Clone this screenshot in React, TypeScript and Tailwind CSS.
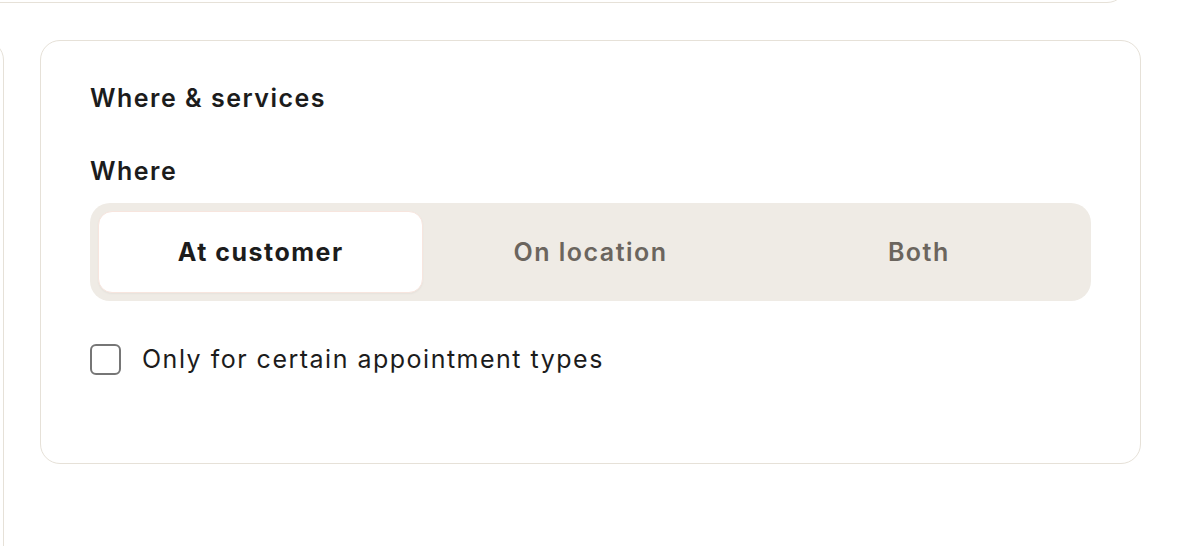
import { useState } from 'react';

const options = ['At customer', 'On location', 'Both'];

export default function App() {
  const [where, setWhere] = useState('At customer');
  const [onlyCertain, setOnlyCertain] = useState(false);

  return (
    <div className="h-[546px] w-full overflow-hidden bg-white font-['Inter',sans-serif] text-[25px] leading-[32px] tracking-[0.06em] text-[#1c1c1c]">
      {/* card above (only its bottom edge shows) */}
      <div className="-mt-[60px] -ml-[20px] h-[63px] w-[1147px] rounded-b-[20px] border border-[#e6e1d8]" />

      <div className="mt-[37px] flex items-start">
        {/* left column card */}
        <div className="-ml-[300px] h-[600px] w-[304px] shrink-0 rounded-tr-[20px] border border-[#e6e1d8]" />

        {/* Where & services */}
        <section className="ml-[36px] h-[424px] w-[1101px] shrink-0 rounded-[20px] border border-[#e6e1d8] px-[49px] pt-[41px]">
          <h2 className="font-semibold">Where &amp; services</h2>

          <h3 className="mt-[41px] font-semibold">Where</h3>

          <div className="mt-[16px] grid h-[98px] grid-cols-3 rounded-[20px] bg-[#efebe5] p-[8px]">
            {options.map((opt) => (
              <button
                key={opt}
                type="button"
                onClick={() => setWhere(opt)}
                className={
                  where === opt
                    ? 'mr-[3px] rounded-[14px] border border-[#f7e5de] bg-white font-bold text-[#1c1c1c] shadow-[0_1px_2px_rgba(0,0,0,0.04)]'
                    : 'rounded-[14px] font-semibold text-[#6b655e]'
                }
              >
                {opt}
              </button>
            ))}
          </div>

          <label className="mt-[42px] flex cursor-pointer items-center gap-[21px]">
            <input
              type="checkbox"
              checked={onlyCertain}
              onChange={(e) => setOnlyCertain(e.target.checked)}
              className="h-[31px] w-[31px] shrink-0 cursor-pointer appearance-none rounded-[6px] border-2 border-[#767676] bg-white checked:bg-[#1c1c1c]"
            />
            <span>Only for certain appointment types</span>
          </label>
        </section>
      </div>
    </div>
  );
}
